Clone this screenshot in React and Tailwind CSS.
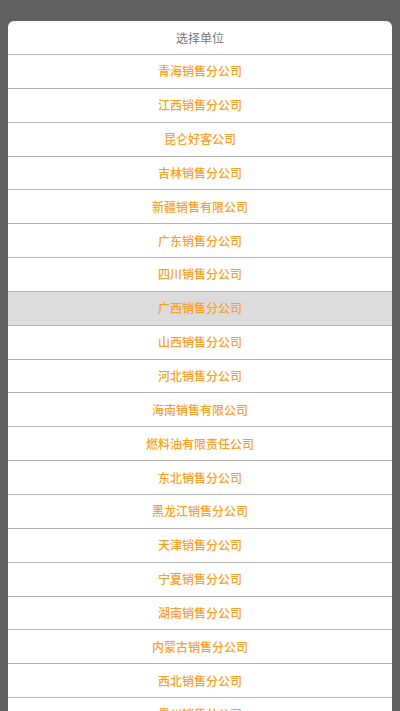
import React from 'react'

const units = [
  '青海销售分公司',
  '江西销售分公司',
  '昆仑好客公司',
  '吉林销售分公司',
  '新疆销售有限公司',
  '广东销售分公司',
  '四川销售分公司',
  '广西销售分公司',
  '山西销售分公司',
  '河北销售分公司',
  '海南销售有限公司',
  '燃料油有限责任公司',
  '东北销售分公司',
  '黑龙江销售分公司',
  '天津销售分公司',
  '宁夏销售分公司',
  '湖南销售分公司',
  '内蒙古销售分公司',
  '西北销售分公司',
  '贵州销售分公司',
]

const App = () => {
  const selected = '广西销售分公司'

  return (
    <div
      className="h-[711px] w-[400px] overflow-hidden bg-[#606060] px-2 pt-[21px]"
      style={{ fontFamily: '"Noto Sans CJK SC", "Noto Sans", sans-serif' }}
    >
      <div className="rounded-t-[6px] bg-white">
        {/* Title */}
        <div className="flex h-[34px] items-center justify-center border-b border-[#b4b4b4] text-[12px] text-[#777777]">
          选择单位
        </div>

        {/* Options */}
        {units.map((name) => (
          <div
            key={name}
            className={`flex h-[33.85px] items-center justify-center border-b border-[#b4b4b4] text-[12px] font-medium text-[#fa9f26] ${
              name === selected ? 'bg-[#dcdcdc]' : 'bg-white'
            }`}
          >
            {name}
          </div>
        ))}
      </div>
    </div>
  )
}

export default App
